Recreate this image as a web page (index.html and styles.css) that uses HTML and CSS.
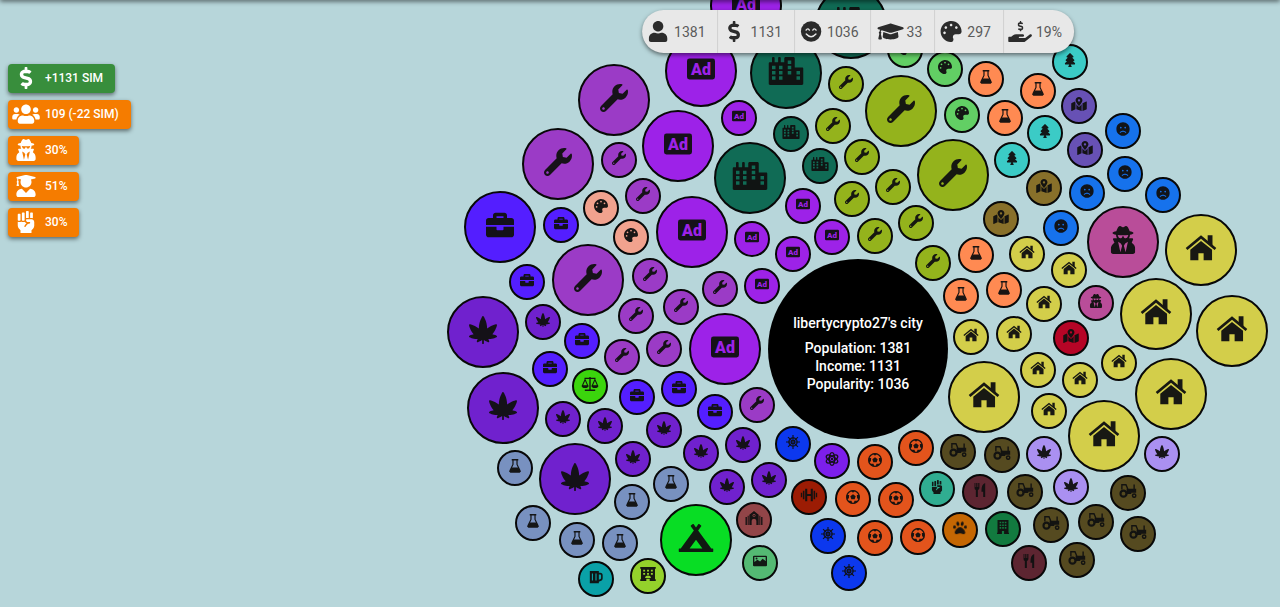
FILE: index.html
```html
<!DOCTYPE html>
<html lang="en">
<head>
<meta charset="utf-8">
<title>libertycrypto27's city</title>
<link rel="stylesheet" href="styles.css">
</head>
<body>
<svg class="sprite" aria-hidden="true">
  <symbol id="wrench" viewBox="0 0 512 512"><path d="M507.73 109.1c-2.24-9.03-13.54-12.09-20.12-5.51l-74.36 74.36-67.88-11.31-11.31-67.88 74.36-74.36c6.62-6.62 3.43-17.9-5.66-20.16-47.38-11.74-99.55.91-136.58 37.93-39.64 39.64-50.55 97.1-34.05 147.2L18.74 402.76c-24.99 24.99-24.99 65.51 0 90.5 24.99 24.99 65.51 24.99 90.5 0l213.21-213.21c50.12 16.71 107.47 5.68 147.37-34.22 37.07-37.07 49.7-89.32 37.91-136.73zM64 472c-13.25 0-24-10.75-24-24 0-13.26 10.75-24 24-24s24 10.74 24 24c0 13.25-10.75 24-24 24z"/></symbol>
  <symbol id="ad" viewBox="0 0 512 512"><rect y="64" width="512" height="384" rx="44"/></symbol>
  <symbol id="briefcase" viewBox="0 0 512 512"><path d="M320 336c0 8.84-7.16 16-16 16h-96c-8.84 0-16-7.16-16-16v-48H0v144c0 25.6 22.4 48 48 48h416c25.6 0 48-22.4 48-48V288H320v48zm144-208h-80V80c0-25.6-22.4-48-48-48H176c-25.6 0-48 22.4-48 48v48H48c-25.6 0-48 22.4-48 48v80h512v-80c0-25.6-22.4-48-48-48zm-144 0H192V96h128v32z"/></symbol>
  <symbol id="leaf" viewBox="0 0 512 512"><path d="M503.47 360.25c-1.56-.82-32.39-16.89-76.78-25.81 64.25-75.12 84.05-161.67 84.93-165.64 1.18-5.33-.44-10.9-4.3-14.77-3.03-3.04-7.12-4.7-11.32-4.7-1.14 0-2.29.12-3.44.38-3.88.85-86.54 19.59-160.58 79.76.01-1.46.01-2.93.01-4.4 0-118.79-59.98-213.72-62.53-217.7A15.973 15.973 0 0 0 256 0c-5.45 0-10.53 2.78-13.47 7.37-2.55 3.98-62.53 98.91-62.53 217.7 0 1.47.01 2.94.01 4.4-74.03-60.16-156.69-78.9-160.58-79.76-1.14-.25-2.29-.38-3.44-.38-4.2 0-8.29 1.66-11.32 4.7A15.986 15.986 0 0 0 .38 168.8c.88 3.97 20.68 90.52 84.93 165.64-44.39 8.92-75.21 24.99-76.78 25.81a16.003 16.003 0 0 0-.02 28.29c2.45 1.29 60.76 31.72 133.49 31.72 6.14 0 11.96-.1 17.5-.31-11.37 22.23-16.52 38.31-16.81 39.22-1.8 5.68-.29 11.89 3.91 16.11a16.019 16.019 0 0 0 16.1 3.99c1.83-.57 37.72-11.99 77.3-39.29V504c0 4.42 3.58 8 8 8h16c4.42 0 8-3.58 8-8v-64.01c39.58 27.3 75.47 38.71 77.3 39.29a16.019 16.019 0 0 0 16.1-3.99c4.2-4.22 5.71-10.43 3.91-16.11-.29-.91-5.45-16.99-16.81-39.22 5.54.21 11.37.31 17.5.31 72.72 0 131.04-30.43 133.49-31.72 5.24-2.78 8.52-8.22 8.51-14.15-.01-5.94-3.29-11.39-8.53-14.15z"/></symbol>
  <symbol id="house" viewBox="0 0 576 512"><path d="M410 24h88v220l-88-72z"/><path d="M288 24 8 254l32 38L288 88l248 204 32-38z"/><path d="M288 128 92 290v190h148V350h96v130h154V290z"/></symbol>
  <symbol id="palette" viewBox="0 0 512 512"><path d="M204.3 5C104.9 24.4 24.8 104.3 5.2 203.4c-37 187 131.7 326.4 258.8 306.7 41.2-6.4 61.4-54.6 42.5-91.7-23.1-45.4 9.9-98.4 60.9-98.4h79.7c35.8 0 64.8-29.6 64.9-65.3C511.5 97.1 368.1-26.9 204.3 5zM96 320c-17.7 0-32-14.3-32-32s14.3-32 32-32 32 14.3 32 32-14.3 32-32 32zm32-128c-17.7 0-32-14.3-32-32s14.3-32 32-32 32 14.3 32 32-14.3 32-32 32zm128-64c-17.7 0-32-14.3-32-32s14.3-32 32-32 32 14.3 32 32-14.3 32-32 32zm128 64c-17.7 0-32-14.3-32-32s14.3-32 32-32 32 14.3 32 32-14.3 32-32 32z"/></symbol>
  <symbol id="city" viewBox="0 0 640 512"><path fill-rule="evenodd" d="M616 192H480V24c0-13-11-24-24-24H312c-13 0-24 11-24 24v72h-64V16c0-9-7-16-16-16h-16c-9 0-16 7-16 16v80h-64V16c0-9-7-16-16-16H80c-9 0-16 7-16 16v80H24c-13 0-24 11-24 24v360c0 18 14 32 32 32h576c18 0 32-14 32-32V216c0-13-11-24-24-24zM64 160h64v64H64zM64 256h64v64H64zM64 352h64v64H64zM192 160h64v64h-64zM192 256h64v64h-64zM192 352h64v64h-64zM352 64h64v64h-64zM352 160h64v64h-64zM352 256h64v64h-64zM512 256h64v64h-64zM512 352h64v64h-64z"/></symbol>
  <symbol id="flask" viewBox="0 0 448 512"><path d="M104 0h240v52H104z"/><path class="line" stroke-width="44" d="M150 30v170L44 420q-14 56 36 56h288q50 0 36-56L298 200V30"/><path d="M98 310h252l70 140q0 46-42 46H70q-42 0-42-46z"/></symbol>
  <symbol id="tree" viewBox="0 0 384 512"><path d="M378.31 378.49L298.42 288h30.63c9.01 0 16.98-5 20.78-13.06 3.8-8.04 2.55-17.26-3.28-24.05L268.42 160h28.89c9.1 0 17.3-5.35 20.86-13.61 3.52-8.13 1.86-17.59-4.24-24.08L203.66 4.83c-6.03-6.45-17.28-6.45-23.32 0L70.06 122.31c-6.1 6.49-7.75 15.95-4.24 24.08C69.38 154.65 77.59 160 86.69 160h28.89l-78.14 90.91c-5.81 6.78-7.06 15.99-3.27 24.04C37.97 283 45.93 288 54.95 288h30.63L5.69 378.49c-6 6.79-7.36 16.09-3.56 24.26 3.75 8.05 12 13.25 21.01 13.25H160v24.45l-30.29 48.4c-5.32 10.64 2.42 23.16 14.31 23.16h95.96c11.89 0 19.63-12.52 14.31-23.16L224 440.45V416h136.86c9.01 0 17.26-5.2 21.01-13.25 3.8-8.17 2.44-17.47-3.56-24.26z"/></symbol>
  <symbol id="map" viewBox="0 0 576 512"><path d="M288 0c-69.59 0-126 56.41-126 126 0 56.26 82.35 158.8 113.9 196.02 6.39 7.54 17.82 7.54 24.2 0C331.65 284.8 414 182.26 414 126 414 56.41 357.59 0 288 0zm0 168c-23.2 0-42-18.8-42-42s18.8-42 42-42 42 18.8 42 42-18.8 42-42 42zM20.12 215.95A32.006 32.006 0 0 0 0 245.66v250.32c0 11.32 11.43 19.06 21.94 14.86L160 448V214.92c-8.84-15.98-16.07-31.54-21.25-46.42L20.12 215.95zM288 359.67c-14.07 0-27.38-6.18-36.51-16.96-19.66-23.2-40.57-49.62-59.49-76.72v182l192 64V266c-18.92 27.09-39.82 53.52-59.49 76.72-9.13 10.77-22.44 16.95-36.51 16.95zm266.06-198.51L416 224v288l139.88-55.95A31.996 31.996 0 0 0 576 426.34V176.02c0-11.32-11.43-19.06-21.94-14.86z"/></symbol>
  <symbol id="frown" viewBox="0 0 496 512"><path d="M248 8C111 8 0 119 0 256s111 248 248 248 248-111 248-248S385 8 248 8zm80 168c17.7 0 32 14.3 32 32s-14.3 32-32 32-32-14.3-32-32 14.3-32 32-32zm-160 0c17.7 0 32 14.3 32 32s-14.3 32-32 32-32-14.3-32-32 14.3-32 32-32zm170.2 218.2C315.8 367.4 282.9 352 248 352s-67.8 15.4-90.2 42.2c-13.5 16.3-38.1-4.2-24.6-20.5C161.7 339.6 203.6 320 248 320s86.3 19.6 114.7 53.8c13.6 16.2-11 36.7-24.5 20.4z"/></symbol>
  <symbol id="secret" viewBox="0 0 448 512"><path d="M383.9 308.3l23.9-62.6c4-10.5-3.7-21.7-15-21.7h-58.5c11-18.9 17.8-40.6 17.8-64v-.3c39.2-7.8 64-19.1 64-31.7 0-13.3-27.3-25.1-70.1-33-9.2-32.8-27-65.8-40.6-82.8-9.5-11.9-25.9-15.6-39.5-8.8l-27.6 13.8c-9 4.5-19.6 4.5-28.6 0L182.1 3.4c-13.6-6.8-30-3.1-39.5 8.8-13.5 17-31.4 50-40.6 82.8-42.7 7.9-70 19.7-70 33 0 12.6 24.8 23.9 64 31.7v.3c0 23.4 6.8 45.1 17.8 64H56.3c-11.5 0-19.2 11.7-14.7 22.3l25.8 60.2C27.3 329.8 0 372.7 0 422.4v44.8C0 491.9 20.1 512 44.8 512h358.4c24.7 0 44.8-20.1 44.8-44.8v-44.8c0-48.4-25.8-90.4-64.1-114.1zM176 480l-41.6-192 49.6 32 24 40-32 120zm96 0l-32-120 24-40 49.6-32L272 480zm41.7-298.5c-3.9 11.9-7 24.6-16.5 33.4-10.1 9.3-48 22.4-64-25-2.8-8.4-15.4-8.4-18.3 0-17 50.2-56 32.4-64 25-9.5-8.8-12.7-21.5-16.5-33.4-.8-2.5-6.3-5.7-6.3-5.8v-10.8c28.3 3.6 61 5.8 96 5.8s67.7-2.1 96-5.8v10.8c-.1.1-5.6 3.2-6.4 5.8z"/></symbol>
  <symbol id="fist" viewBox="0 0 384 512"><path d="M255.98 160V16c0-8.84-7.16-16-16-16h-32c-8.84 0-16 7.16-16 16v146.93c5.02-1.78 10.34-2.93 15.97-2.93h48.03zm128 95.99c-.01-35.34-28.66-63.99-63.99-63.99H207.85c-8.78 0-15.9 7.07-15.9 15.85v.56c0 26.27 21.3 47.59 47.57 47.59h35.26c9.68 0 13.2 3.58 13.2 8v16.2c0 4.29-3.59 7.78-7.88 8-44.52 2.28-64.16 24.71-96.05 72.55l-6.31 9.47a7.994 7.994 0 0 1-11.09 2.22l-13.31-8.88a7.994 7.994 0 0 1-2.22-11.09l6.31-9.47c15.73-23.6 30.2-43.26 47.31-58.08-17.27-5.51-31.4-18.12-38.87-34.45-6.59 3.41-13.96 5.52-21.87 5.52h-32c-12.34 0-23.49-4.81-32-12.48C71.48 251.19 60.33 256 48 256H16c-5.64 0-10.97-1.15-16-2.95v77.93c0 33.95 13.48 66.5 37.49 90.51L63.99 448v64h255.98v-63.96l35.91-35.92A96.035 96.035 0 0 0 384 344.21l-.02-88.22zm-32.01-90.09V48c0-8.84-7.16-16-16-16h-32c-8.84 0-16 7.16-16 16v112h32c11.28 0 21.94 2.31 32 5.9zM16 224h32c8.84 0 16-7.16 16-16V80c0-8.84-7.16-16-16-16H16C7.16 64 0 71.16 0 80v128c0 8.84 7.16 16 16 16zm95.99 0h32c8.84 0 16-7.16 16-16V48c0-8.84-7.16-16-16-16h-32c-8.84 0-16 7.16-16 16v160c0 8.84 7.16 16 16 16z"/></symbol>
  <symbol id="dollar" viewBox="0 0 288 512"><path d="M209.2 233.4l-108-31.6C88.7 198.2 80 186.5 80 173.5c0-16.3 13.2-29.5 29.5-29.5h66.3c12.2 0 24.2 3.7 34.2 10.5 6.1 4.1 14.3 3.1 19.5-2l34.8-34c7.1-6.9 6.1-18.4-1.8-24.5C238 74.8 207.4 64.1 176 64V16c0-8.8-7.2-16-16-16h-32c-8.8 0-16 7.2-16 16v48h-2.5C45.8 64-5.4 118.7.5 183.6c4.2 46.1 39.4 83.6 83.8 96.6l102.5 30c12.5 3.7 21.2 15.3 21.2 28.3 0 16.3-13.2 29.5-29.5 29.5h-66.3C100 368 88 364.3 78 357.5c-6.1-4.1-14.3-3.1-19.5 2l-34.8 34c-7.1 6.9-6.1 18.4 1.8 24.5 24.5 19.2 55.1 29.9 86.5 30v48c0 8.8 7.2 16 16 16h32c8.8 0 16-7.2 16-16v-48.2c46.6-.9 90.3-28.6 105.7-72.7 21.5-61.6-14.6-124.8-72.5-141.7z"/></symbol>
  <symbol id="users" viewBox="0 0 640 512"><path d="M96 224c35.3 0 64-28.7 64-64s-28.7-64-64-64-64 28.7-64 64 28.7 64 64 64zm448 0c35.3 0 64-28.7 64-64s-28.7-64-64-64-64 28.7-64 64 28.7 64 64 64zm32 32h-64c-17.6 0-33.5 7.1-45.1 18.6 40.3 22.1 68.9 62 75.1 109.4h66c17.7 0 32-14.3 32-32v-32c0-35.3-28.7-64-64-64zm-256 0c61.9 0 112-50.1 112-112S381.9 32 320 32 208 82.1 208 144s50.1 112 112 112zm76.8 32h-8.3c-20.8 10-43.9 16-68.5 16s-47.6-6-68.5-16h-8.3C179.6 288 128 339.6 128 403.2V432c0 26.5 21.5 48 48 48h288c26.5 0 48-21.5 48-48v-28.8c0-63.6-51.6-115.2-115.2-115.2zm-223.7-13.4C161.5 263.1 145.6 256 128 256H64c-35.3 0-64 28.7-64 64v32c0 17.7 14.3 32 32 32h65.9c6.3-47.4 34.9-87.3 75.2-109.4z"/></symbol>
  <symbol id="user" viewBox="0 0 448 512"><path d="M224 256c70.7 0 128-57.3 128-128S294.7 0 224 0 96 57.3 96 128s57.3 128 128 128zm89.6 32h-16.7c-22.2 10.2-46.9 16-72.9 16s-50.6-5.8-72.9-16h-16.7C60.2 288 0 348.2 0 422.4V464c0 26.5 21.5 48 48 48h352c26.5 0 48-21.5 48-48v-41.6c0-74.2-60.2-134.4-134.4-134.4z"/></symbol>
  <symbol id="graduate" viewBox="0 0 448 512"><path d="M319.4 320.6L224 416l-95.4-95.4C57.1 323.7 0 382.2 0 454.4v9.6c0 26.5 21.5 48 48 48h352c26.5 0 48-21.5 48-48v-9.6c0-72.2-57.1-130.7-128.6-133.8zM13.6 79.8l6.4 1.5v58.4c-7 4.2-12 11.5-12 20.3 0 8.4 4.6 15.4 11.1 19.7L3.5 242c-1.7 6.9 2.1 14 7.6 14h41.8c5.5 0 9.3-7.1 7.6-14l-15.6-62.3C51.4 175.4 56 168.4 56 160c0-8.8-5-16.1-12-20.3V87.1l66 15.9c-8.6 17.2-14 36.4-14 57 0 70.7 57.3 128 128 128s128-57.3 128-128c0-20.6-5.3-39.8-14-57l96.3-23.2c18.2-4.4 18.2-27.1 0-31.5l-190.4-46c-13-3.1-26.7-3.1-39.7 0L13.6 48.2c-18.1 4.4-18.1 27.2 0 31.6z"/></symbol>
  <symbol id="cap" viewBox="0 0 640 512"><path d="M622.34 153.2L343.4 67.5c-15.2-4.67-31.6-4.67-46.79 0L17.66 153.2c-23.54 7.23-23.54 38.36 0 45.59l48.63 14.94c-10.67 13.19-17.23 29.28-17.88 46.9C38.78 266.15 32 276.11 32 288c0 10.78 5.68 19.85 13.86 25.65L20.33 428.53C18.11 438.52 25.71 448 35.94 448h56.11c10.24 0 17.84-9.48 15.62-19.47L82.14 313.65C90.32 307.85 96 298.78 96 288c0-11.57-6.47-21.25-15.66-26.87.76-15.02 8.44-28.3 20.69-36.72L296.6 284.5c9.06 2.78 26.44 6.25 46.79 0l278.95-85.7c23.55-7.24 23.55-38.36 0-45.6zM352.79 315.09c-28.53 8.76-52.84 3.92-65.59 0l-145.02-44.55L128 384c0 35.35 85.96 64 192 64s192-28.65 192-64l-14.18-113.47-145.03 44.56z"/></symbol>
  <symbol id="hand" viewBox="0 0 576 512"><path d="M565.3 328.1c-11.8-10.7-30.2-10-42.6 0L430.3 402c-11.3 9.1-25.4 14-40 14H272c-8.8 0-16-7.2-16-16s7.2-16 16-16h78.3c15.9 0 30.7-10.9 33.3-26.6 3.3-20-12.1-37.4-31.6-37.4H192c-27 0-53.1 9.3-74.1 26.3L71.4 384H16c-8.8 0-16 7.2-16 16v96c0 8.8 7.2 16 16 16h356.8c14.5 0 28.6-4.9 40-14L564 377c15.2-12.1 16.4-35.3 1.3-48.9z"/><use href="#dollar" x="226" y="0" width="144" height="256"/></symbol>
  <symbol id="smile" viewBox="0 0 496 512"><circle cx="248" cy="256" r="248"/><path class="cut-line" stroke-width="34" d="M126 222q38-58 80 0M290 222q42-58 80 0M130 318q118 132 236 0"/></symbol>
  <symbol id="camp" viewBox="0 0 640 512"><path d="M624 448h-24.68L359.54 117.75l53.41-73.55c5.19-7.15 3.61-17.16-3.54-22.35l-25.9-18.79c-7.15-5.19-17.15-3.61-22.35 3.55L320 63.3 278.83 6.6c-5.19-7.15-15.2-8.74-22.35-3.55l-25.88 18.8c-7.15 5.19-8.74 15.2-3.54 22.35l53.41 73.55L40.68 448H16c-8.84 0-16 7.16-16 16v32c0 8.84 7.16 16 16 16h608c8.84 0 16-7.16 16-16v-32c0-8.84-7.16-16-16-16zM320 288l116.36 160H203.64L320 288z"/></symbol>
  <symbol id="scales" viewBox="0 0 640 512"><path class="line" stroke-width="50" d="M120 50h400M320 0v480M130 486h380"/><path class="line" stroke-width="38" d="M140 90 40 320h200zM500 90 400 320h200z"/><path d="M12 316h256q-12 90-128 90T12 316zM372 316h256q-12 90-128 90T372 316z"/></symbol>
  <symbol id="tractor" viewBox="0 0 640 512"><path d="M270 170h350v150H270z"/><path class="line" stroke-width="50" d="M96 200V26h150l66 160M544 20v160"/><path d="M250 290h190v80H250z"/><circle class="line" stroke-width="84" cx="154" cy="352" r="112"/><circle class="line" stroke-width="54" cx="546" cy="424" r="62"/></symbol>
  <symbol id="beer" viewBox="0 0 512 512"><path fill-rule="evenodd" d="M30 32h330v70h50c60 0 90 40 90 90v110c0 60-30 80-60 95l-80 34v49H30zM360 160v195l64-28c14-8 18-14 18-34v-90c0-28-12-43-36-43zM105 130v250h42V130zM235 130v250h42V130z"/></symbol>
  <symbol id="hotel" viewBox="0 0 576 512"><path fill-rule="evenodd" d="M0 0h576v60h-32v392h32v60H350v-80H226v80H0v-60h32V60H0zM112 96v70h70V96zM253 96v70h70V96zM394 96v70h70V96zM112 216v70h70v-70zM253 216v70h70v-70zM394 216v70h70v-70zM176 400h224q-16-90-112-90t-112 90z"/></symbol>
  <symbol id="church" viewBox="0 0 640 512"><path fill-rule="evenodd" d="M150 512V140L320 0l170 140v372h-84V360q-10-74-86-74t-86 74v152zM320 110a56 56 0 1 0 1 0z"/><path d="M4 220h56v292H4zM88 170h38v342H88zM514 170h38v342h-38zM580 220h56v292h-56zM296 150h52v40h-52z"/></symbol>
  <symbol id="image" viewBox="0 0 512 512"><path fill-rule="evenodd" d="M40 64h432q40 0 40 40v304q0 40-40 40H40q-40 0-40-40V104q0-40 40-40zM50 114v180l110-80 100 60 90-100 112 80V114z"/><circle cx="130" cy="164" r="34"/></symbol>
  <symbol id="gear" viewBox="0 0 512 512"><circle class="line" stroke-width="48" cx="256" cy="256" r="150"/><circle cx="256" cy="256" r="74"/><path class="line" stroke-width="42" d="M256 0v512M0 256h512M75 75l362 362M437 75 75 437"/><circle class="cut" cx="256" cy="256" r="24"/></symbol>
  <symbol id="atom" viewBox="0 0 512 512"><g class="line" stroke-width="48"><ellipse cx="256" cy="256" rx="94" ry="232"/><ellipse cx="256" cy="256" rx="94" ry="232" transform="rotate(60 256 256)"/><ellipse cx="256" cy="256" rx="94" ry="232" transform="rotate(-60 256 256)"/></g><circle cx="256" cy="256" r="44"/></symbol>
  <symbol id="ball" viewBox="0 0 512 512"><circle class="line" stroke-width="44" cx="256" cy="256" r="234"/><path d="m256 156 98 70-38 116H196l-38-116zM170 20h172l-86 80zM20 180h96l-10 120-76 50zM492 180h-96l10 120 76 50zM90 390l112 0 30 110-100-30zM422 390l-112 0-30 110 100-30z"/></symbol>
  <symbol id="dumbbell" viewBox="0 0 640 512"><path d="M20 170h50v172H20zM96 100h56v312H96zM180 30h76v452h-76zM384 30h76v452h-76zM488 100h56v312h-56zM570 170h50v172h-50zM250 222h140v68H250z"/></symbol>
  <symbol id="utensils" viewBox="0 0 416 512"><path d="M0 0h40v150h30V0h44v150h30V0h42v180q0 60-56 80v252H56V260Q0 240 0 180zM400 0v512h-76V320h-64q-10-270 140-320z"/></symbol>
  <symbol id="paw" viewBox="0 0 512 512"><path d="M256 224c-79 0-192 123-192 200 0 35 27 56 72 56 49 0 81-25 120-25s72 25 120 25c45 0 72-21 72-56 0-77-113-200-192-200z"/><ellipse cx="56" cy="224" rx="52" ry="66" transform="rotate(-18 56 224)"/><ellipse cx="456" cy="224" rx="52" ry="66" transform="rotate(18 456 224)"/><ellipse cx="176" cy="104" rx="54" ry="78" transform="rotate(-12 176 104)"/><ellipse cx="336" cy="104" rx="54" ry="78" transform="rotate(12 336 104)"/></symbol>
  <symbol id="building" viewBox="0 0 448 512"><path fill-rule="evenodd" d="M24 0h400v470h24v42H264V400h-80v112H0v-42h24zM100 60v60h60V60zM194 60v60h60V60zM288 60v60h60V60zM100 160v60h60v-60zM194 160v60h60v-60zM288 160v60h60v-60zM100 260v60h60v-60zM194 260v60h60v-60zM288 260v60h60v-60z"/></symbol>
</svg>

<main class="board">
  <svg class="city-map" id="city-map" viewBox="0 0 1280 607" preserveAspectRatio="xMidYMin slice" role="img" aria-label="City map">
    <g id="bubbles"></g>
    <circle cx="858" cy="349" r="90"/>
    <g class="city-label">
      <text x="858" y="328">libertycrypto27's city</text>
      <text x="858" y="353">Population: 1381</text>
      <text x="858" y="371">Income: 1131</text>
      <text x="858" y="389">Popularity: 1036</text>
    </g>
  </svg>
</main>

<aside class="bonuses">
  <button class="bonus bonus-good" type="button"><svg class="icon"><use href="#dollar"/></svg>+1131 SIM</button>
  <button class="bonus" type="button"><svg class="icon"><use href="#users"/></svg>109 (-22 SIM)</button>
  <button class="bonus" type="button"><svg class="icon"><use href="#secret"/></svg>30%</button>
  <button class="bonus" type="button"><svg class="icon"><use href="#graduate"/></svg>51%</button>
  <button class="bonus" type="button"><svg class="icon"><use href="#fist"/></svg>30%</button>
</aside>

<ul class="stats">
  <li class="stat"><svg class="icon"><use href="#user"/></svg>1381</li>
  <li class="stat"><svg class="icon"><use href="#dollar"/></svg>1131</li>
  <li class="stat"><svg class="icon"><use href="#smile"/></svg>1036</li>
  <li class="stat stat-wide"><svg class="icon"><use href="#cap"/></svg>33</li>
  <li class="stat"><svg class="icon"><use href="#palette"/></svg>297</li>
  <li class="stat"><svg class="icon"><use href="#hand"/></svg>19%</li>
</ul>
<script src="bubbles.js"></script>
</body>
</html>
```

FILE: styles.css
```css
* {
  box-sizing: border-box;
}

body {
  --ink: #111;
  margin: 0;
  height: 100vh;
  overflow: hidden;
  background: #b7d6da;
  font-family: Roboto, "Liberation Sans", sans-serif;
}

body::before {
  content: "";
  position: absolute;
  z-index: 1;
  top: -4px;
  left: 0;
  right: 0;
  height: 4px;
  box-shadow: 0 1px 5px rgba(0, 0, 0, 0.7);
}

.sprite {
  position: absolute;
  width: 0;
  height: 0;
}

.line {
  fill: none;
  stroke: var(--ink);
}

.cut {
  fill: currentColor;
}

.cut-line {
  fill: none;
  stroke: currentColor;
  stroke-linecap: round;
}

.ad-text {
  fill: currentColor;
  font-size: 16px;
  font-weight: 900;
  text-anchor: middle;
}

.ad-text-small {
  font-size: 8px;
}

.board {
  height: 100%;
}

.city-map {
  display: block;
  width: 100%;
  height: 100%;
}

.bubble {
  fill: currentColor;
  stroke: #080808;
  stroke-width: 2px;
}

.bubble-icon {
  fill: var(--ink);
  opacity: 0.96;
}

.city-label {
  fill: #fff;
  font-size: 14px;
  font-weight: 500;
  text-anchor: middle;
}

.bonuses {
  position: absolute;
  top: 64px;
  left: 8px;
  display: flex;
  flex-direction: column;
  align-items: flex-start;
  gap: 7px;
}

.bonus {
  --ink: #fff;
  display: flex;
  align-items: center;
  gap: 5px;
  height: 29px;
  padding: 0 12px 2px 4px;
  border: 0;
  border-radius: 4px;
  background: #f57c00;
  color: #fff;
  box-shadow: 0 2px 4px rgba(0, 0, 0, 0.5);
  font: 500 12px/20px Roboto, "Liberation Sans", sans-serif;
}

.bonus-good {
  background: #388e3c;
}

.icon {
  flex: none;
  width: 28px;
  height: 22px;
  fill: var(--ink);
}

.stats {
  --ink: #2b2b2b;
  position: absolute;
  top: 10px;
  left: calc(50% + 218px);
  transform: translateX(-50%);
  display: flex;
  margin: 0;
  padding: 0;
  border-radius: 22px;
  background: #e8e8e8;
  box-shadow: 0 2px 4px rgba(0, 0, 0, 0.5);
  list-style: none;
}

.stat {
  display: flex;
  align-items: center;
  gap: 4px;
  height: 43px;
  padding: 0 12px 0 4px;
  color: #5a5a5a;
  font-size: 14px;
}

.stat + .stat {
  border-left: 1px solid #d0d0d0;
}

.stat .icon {
  width: 24px;
  height: 21px;
  color: #e8e8e8;
}

.stat-wide {
  gap: 2px;
  padding-left: 6px;
}

.stat-wide .icon {
  width: 27px;
}
```

FILE: bubbles.js
```js
// Each group: icon, colour, large bubbles, small bubbles (centre points).
const groups = [
  ["ad", "#9d22e8", [[746,6],[701,71],[678,146],[692,232],[725,349]],
    [[739,118],[803,206],[832,237],[752,239],[793,254],[762,286]]],
  ["city", "#106b55", [[851,23],[786,73],[750,178]], [[791,134],[820,166]]],
  ["wrench", "#9b3bc6", [[614,100],[558,164],[588,280]],
    [[619,160],[643,196],[650,276],[636,316],[681,307],[720,289],[622,357],[664,349],[757,405]]],
  ["wrench", "#94b31c", [[901,111],[953,175]],
    [[846,84],[833,126],[862,157],[852,199],[893,187],[875,236],[916,223],[933,263]]],
  ["briefcase", "#541eff", [[500,227]],
    [[561,225],[527,282],[582,341],[550,369],[637,397],[679,389],[715,412]]],
  ["leaf", "#7021ce", [[483,332],[503,408],[575,479]],
    [[543,322],[563,419],[605,426],[664,430],[633,459],[701,453],[743,445],[727,487],[769,480]]],
  ["leaf", "#aa90f1", [], [[1044,454],[1162,454],[1071,487]]],
  ["house", "#d3ce4a", [[1201,250],[1156,314],[1232,331],[1171,394],[1104,436],[984,397]],
    [[1027,254],[1069,270],[1044,304],[971,337],[1014,334],[1038,370],[1080,380],[1119,363],[1049,411]]],
  ["palette", "#f1a28e", [], [[601,208],[631,237]]],
  ["palette", "#62cf64", [], [[905,50],[945,69],[962,115]]],
  ["flask", "#ff8a52", [], [[986,79],[1005,118],[1038,91],[976,255],[1004,290],[961,296]]],
  ["flask", "#7891c0", [], [[515,468],[632,502],[671,484],[533,523],[577,540],[620,543]]],
  ["tree", "#3bcbc6", [], [[1070,62],[1045,133],[1012,160]]],
  ["map", "#6751b5", [], [[1079,106],[1085,150]]],
  ["map", "#88702a", [], [[1044,188],[1001,219]]],
  ["map", "#b60526", [], [[1071,338]]],
  ["frown", "#1672ec", [], [[1123,131],[1125,174],[1087,193],[1163,195],[1061,228]]],
  ["secret", "#b94d99", [[1123,242]], [[1096,303]]],
  ["scales", "#3bd50d", [], [[590,386]]],
  ["camp", "#08dd24", [[696,540]], []],
  ["beer", "#0aa1a7", [], [[596,579]]],
  ["hotel", "#94d12b", [], [[648,576]]],
  ["church", "#924548", [], [[754,520]]],
  ["image", "#54b973", [], [[760,563]]],
  ["gear", "#0c38ee", [], [[793,444],[828,536],[849,573]]],
  ["atom", "#7c1fec", [], [[832,461]]],
  ["ball", "#e3541c", [], [[875,462],[916,448],[853,499],[896,500],[875,538],[918,537]]],
  ["dumbbell", "#9c1c04", [], [[809,497]]],
  ["tractor", "#554a20", [],
    [[958,452],[1002,455],[1025,492],[1128,493],[1051,525],[1096,522],[1138,534],[1077,560]]],
  ["fist", "#30ad91", [], [[937,489]]],
  ["utensils", "#5d2531", [], [[980,492],[1029,563]]],
  ["paw", "#c56703", [], [[960,530]]],
  ["building", "#127a3f", [], [[1003,529]]]
];

const svgNS = "http://www.w3.org/2000/svg";
const layer = document.getElementById("bubbles");

function add(parent, name, attributes) {
  const node = document.createElementNS(svgNS, name);
  for (const [key, value] of Object.entries(attributes)) node.setAttribute(key, value);
  parent.append(node);
  return node;
}

function drawBubble(icon, color, [cx, cy], radius, size) {
  const box = document.getElementById(icon).viewBox.baseVal;
  const width = size * box.width / box.height;
  const group = add(layer, "g", { color });
  add(group, "circle", { class: "bubble", cx, cy, r: radius });
  add(group, "use", {
    class: "bubble-icon", href: "#" + icon,
    x: cx - width / 2, y: cy - 2 - size / 2, width, height: size
  });
  if (icon === "ad") {
    const large = size > 20;
    const text = add(group, "text", {
      class: large ? "ad-text" : "ad-text ad-text-small",
      x: cx, y: cy + (large ? 4 : 1)
    });
    text.textContent = "Ad";
  }
}

for (const [icon, color, large, small] of groups) {
  large.forEach(point => drawBubble(icon, color, point, 35, 28));
  small.forEach(point => drawBubble(icon, color, point, 17, 14));
}
```
